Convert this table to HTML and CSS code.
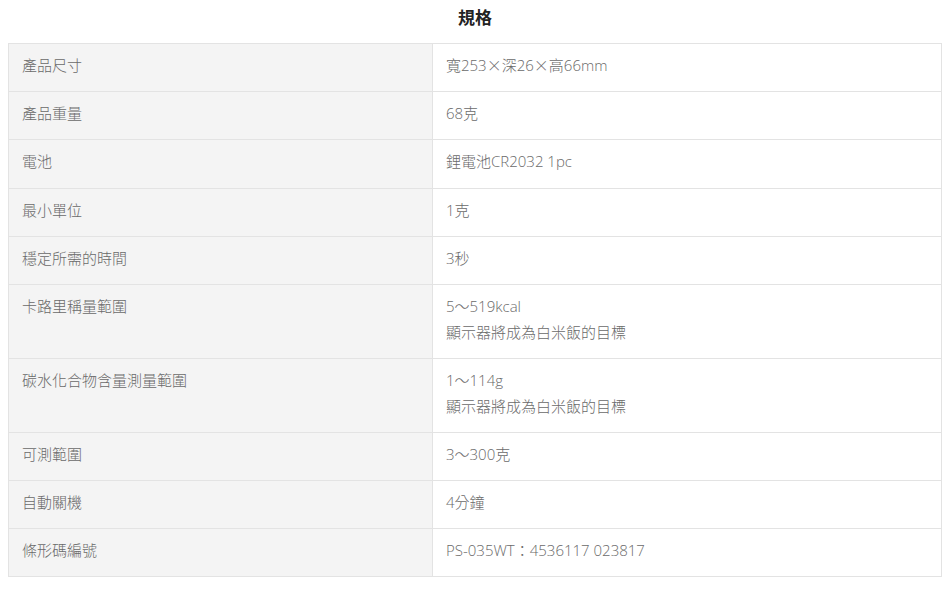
FILE: index.html
```html
<!DOCTYPE html>
<html lang="zh-Hant">
<head>
<meta charset="utf-8">
<title>規格</title>
<link rel="stylesheet" href="styles.css">
</head>
<body>
<div class="page">
  <h2 class="title">規格</h2>
  <table class="spec">
    <tr><th>產品尺寸</th><td>寬253<span class="cjk">×</span>深26<span class="cjk">×</span>高66mm</td></tr>
    <tr><th>產品重量</th><td>68克</td></tr>
    <tr><th>電池</th><td>鋰電池CR2032 1pc</td></tr>
    <tr><th>最小單位</th><td>1克</td></tr>
    <tr><th>穩定所需的時間</th><td>3秒</td></tr>
    <tr><th>卡路里稱量範圍</th><td>5～519kcal<br>顯示器將成為白米飯的目標</td></tr>
    <tr><th>碳水化合物含量測量範圍</th><td>1～114g<br>顯示器將成為白米飯的目標</td></tr>
    <tr><th>可測範圍</th><td>3～300克</td></tr>
    <tr><th>自動關機</th><td>4分鐘</td></tr>
    <tr><th>條形碼編號</th><td>PS-035WT：4536117 023817</td></tr>
  </table>
</div>
</body>
</html>
```
FILE: styles.css
```css
html, body {
  margin: 0;
  padding: 0;
  background: #fff;
}
.page {
  padding: 0 8px;
  font-family: "Noto Sans CJK TC", "Noto Sans", sans-serif;
}
.title {
  margin: 0 0 13px;
  padding-top: 4px;
  line-height: 26px;
  font-size: 17px;
  font-weight: 700;
  color: #222;
  text-align: center;
}
.spec {
  width: 934px;
  border-collapse: collapse;
  font-family: "Open Sans", "Noto Sans CJK TC", sans-serif;
  font-size: 15px;
  color: #6a6a6a;
}
.spec th, .spec td {
  border: 1px solid #e3e3e3;
  padding: 9px 13px 12.4px;
  line-height: 25.8px;
  text-align: left;
  vertical-align: top;
  font-weight: 300;
}
.spec th {
  width: 397px;
  background: #f4f4f4;
}
.spec td {
  background: #fff;
}
.cjk {
  font-family: "Noto Sans CJK TC", sans-serif;
  line-height: 1;
}
```
